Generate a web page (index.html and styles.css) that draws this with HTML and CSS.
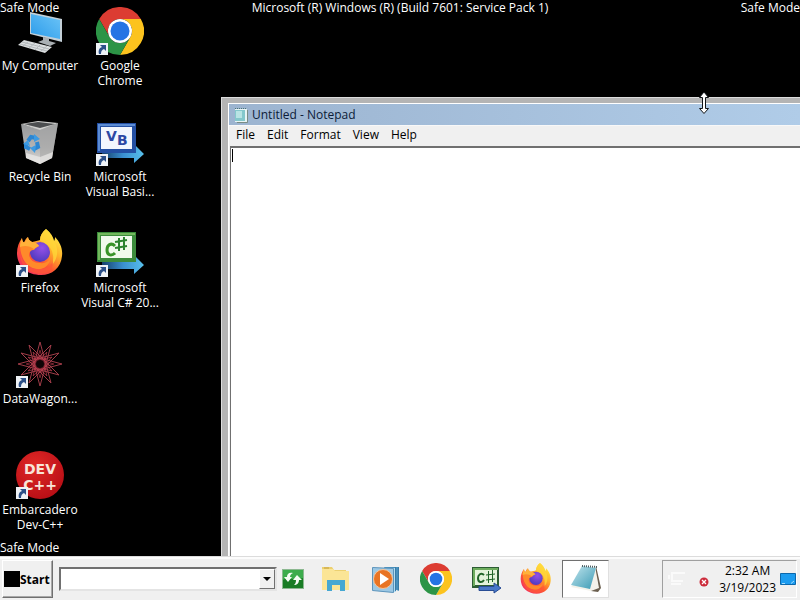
FILE: index.html
```html
<!DOCTYPE html>
<html lang="en">
<head>
  <meta charset="UTF-8">
  <meta name="viewport" content="width=device-width, initial-scale=1.0">
  <title>Untitled - Notepad</title>
  <link rel="stylesheet" href="styles.css">
</head>
<body>
  <!-- shared icons -->
  <svg class="sprite" aria-hidden="true">
    <defs>
      <linearGradient id="screen" x1="0" y1="1" x2="1" y2="0">
        <stop offset="0" stop-color="#2b9bea"/><stop offset="1" stop-color="#6cc4f7"/>
      </linearGradient>
      <linearGradient id="bin" x1="0" y1="0" x2="0" y2="1">
        <stop offset="0" stop-color="#96989a"/><stop offset=".6" stop-color="#b4b4b4"/><stop offset="1" stop-color="#dcdad8"/>
      </linearGradient>
      <linearGradient id="arrow" x1="0" y1="0" x2="1" y2="0">
        <stop offset="0" stop-color="#15406a"/><stop offset=".5" stop-color="#3a8fd0"/><stop offset="1" stop-color="#58c0ec"/>
      </linearGradient>
      <linearGradient id="flame" x1="1" y1="0" x2="0.2" y2="1">
        <stop offset="0.1" stop-color="#fff04a"/><stop offset=".4" stop-color="#ffb12a"/><stop offset=".65" stop-color="#ff5a30"/><stop offset="1" stop-color="#f02868"/>
      </linearGradient>
      <radialGradient id="globe" cx=".6" cy=".3" r=".8">
        <stop offset="0" stop-color="#9450e8"/><stop offset="1" stop-color="#4638b8"/>
      </radialGradient>
      <linearGradient id="page" x1="0" y1="0" x2="1" y2="1">
        <stop offset="0" stop-color="#c4e6ee"/><stop offset="1" stop-color="#3a9ab4"/>
      </linearGradient>
      <radialGradient id="dev" cx=".4" cy=".3" r=".8">
        <stop offset="0" stop-color="#e02826"/><stop offset="1" stop-color="#b40c14"/>
      </radialGradient>
    </defs>

    <symbol id="chrome" viewBox="0 0 48 48">
      <path fill="#dc3c32" d="M3.2 12A24 24 0 0 1 44.8 12H24A12 12 0 0 0 13.6 30z"/>
      <path fill="#fcc31e" d="M44.8 12A24 24 0 0 1 24 48L34.4 30A12 12 0 0 0 24 12z"/>
      <path fill="#2c9446" d="M24 48A24 24 0 0 1 3.2 12L13.6 30A12 12 0 0 0 34.4 30z"/>
      <circle cx="24" cy="24" r="12" fill="#fff"/>
      <circle cx="24" cy="24" r="9.5" fill="#2474e4"/>
    </symbol>

    <symbol id="firefox" viewBox="0 0 48 48">
      <path fill="url(#flame)" d="M30 0C35 4 37 8 38 12C39 11 39 9 39 8C44 13 47 20 46 27C45 39 36 46 25 46C11 46 1 37 1 24C1 18 3 13 6 9C6 11 7 13 8 14C9 11 10 9 12 8C12 10 14 12 16 13C19 12 22 12 24 11C24 7 26 3 30 0z"/>
      <path fill="#ffd83a" d="M30 0C35 4 37 8 38 12C43 19 42 30 36 36C39 27 36 19 31 16C27 13 24 12 24 11C24 7 26 3 30 0z" opacity=".75"/>
      <circle cx="24" cy="23" r="10" fill="url(#globe)"/>
      <path fill="#ff8a2a" d="M4 15C8 12 12 12 16 14C19 13 22 15 23 17C21 18 19 19 18 21C15 21 13 23 13 26C14 31 18 34 24 34C30 35 34 31 35 28C34 36 28 41 21 40C10 39 4 28 4 15z"/>
      <path fill="#ffb23a" d="M6 9C6 11 7 13 8 14L12 8C12 10 14 12 16 13C19 13 22 15 23 17C21 18 19 19 18 20C14 17 9 16 4 18C4 14 5 11 6 9z"/>
      <path fill="#ff5838" d="M4 24C7 36 16 41 24 40C30 40 35 37 37 32C38 40 31 45 24 45C12 45 4 36 4 24z" opacity=".7"/>
    </symbol>

    <symbol id="csharp" viewBox="0 0 48 48">
      <path fill="url(#arrow)" d="M6 32H38V26L48 36L38 45V40H6z"/>
      <path fill="#3c8c3c" d="M1 3H40V33H1z"/>
      <path fill="#72b85c" d="M2 4H39V6H4V31H2z"/>
      <path fill="#f0faec" d="M5 7H36V29H5z"/>
      <path fill="none" stroke="#389428" stroke-width="3" d="M19 17C15 13 11 16 11 21C11 27 16 27 19 24"/>
      <path fill="none" stroke="#2c8430" stroke-width="2" d="M23 9V22M28 8V21M19 13L31 11M19 19L31 17"/>
    </symbol>

    <symbol id="notepad" viewBox="0 0 32 32">
      <path fill="#6c6050" d="M26 3L31 25L28 29L21 28z"/>
      <path fill="#f4f2ea" d="M25 3L29 25L21 28L1 24z"/>
      <path fill="url(#page)" d="M12 3L26 5L20 26L1 22z"/>
      <path fill="none" stroke="#4c5c60" stroke-width="2" stroke-dasharray="1 1" d="M12 3L27 4"/>
    </symbol>

    <symbol id="shortcut" viewBox="0 0 12 12">
      <path fill="#eef2f6" d="M0 0H12V12H0z"/>
      <path fill="#2c5088" d="M4 2H10V8L8 6C6 7 5 8 5 11H3C2 8 3 5 6 4z"/>
    </symbol>
  </svg>

  <main class="desktop">
    <span class="safe-mode top-left">Safe Mode</span>
    <span class="safe-mode top-center">Microsoft (R) Windows (R) (Build 7601: Service Pack 1)</span>
    <span class="safe-mode top-right">Safe Mode</span>
    <span class="safe-mode bottom-left">Safe Mode</span>

    <div class="icons">
      <button class="icon">
        <svg class="icon-image" viewBox="0 0 48 48">
          <path fill="#c4d0d8" d="M14 5L46 12V35L14 27z"/>
          <path fill="url(#screen)" d="M15 7L44 13V32L15 26z"/>
          <path fill="#aab0b4" d="M27 30L33 31V34L40 36L34 39L22 35L27 33z"/>
          <path fill="#dcdfe0" d="M8 33L36 40L29 46L2 38z"/>
          <path fill="none" stroke="#b4b9bc" d="M6 35L33 42M4 37L31 44M13 34L7 39M19 36L13 41M25 37L19 43M31 39L25 44"/>
        </svg>
        <span class="icon-label">My Computer</span>
      </button>
      <button class="icon">
        <svg class="icon-image" viewBox="0 0 48 48">
          <path fill="url(#bin)" d="M5 6L23 11L42 5L36 40L24 46L10 40z"/>
          <path fill="#d0d0ce" d="M5 6L22 3L42 5L24 12z"/>
          <path fill="#4c4e50" d="M8 6L22 4L39 6L24 10z"/>
          <path fill="#a8a8a8" d="M24 12L42 5L36 40L24 46z" opacity=".6"/>
          <path fill="#ecebea" d="M10 35L24 39L37 34L36 40L24 46L10 40z" opacity=".7"/>
          <path fill="none" stroke="#2b86d2" stroke-width="4" d="M12 23L15 19L20 20M21 24L22 29L18 31M14 31L10 29L10 25"/>
          <path fill="#3c9ae2" d="M18 16L24 21L18 24zM20 27L19 35L14 30zM7 26L12 22L14 28z"/>
        </svg>
        <span class="icon-label">Recycle Bin</span>
      </button>
      <button class="icon">
        <svg class="icon-image" viewBox="0 0 48 48"><use href="#firefox"/><use href="#shortcut" y="36" width="12" height="12"/></svg>
        <span class="icon-label">Firefox</span>
      </button>
      <button class="icon">
        <svg class="icon-image" viewBox="0 0 48 48">
          <defs>
            <path id="petal" d="M24 2L19 18C17 26 31 26 29 18z"/>
            <g id="petals">
              <use href="#petal"/>
              <use href="#petal" transform="rotate(30 24 24)"/>
              <use href="#petal" transform="rotate(60 24 24)"/>
              <use href="#petal" transform="rotate(90 24 24)"/>
              <use href="#petal" transform="rotate(120 24 24)"/>
              <use href="#petal" transform="rotate(150 24 24)"/>
              <use href="#petal" transform="rotate(180 24 24)"/>
              <use href="#petal" transform="rotate(210 24 24)"/>
              <use href="#petal" transform="rotate(240 24 24)"/>
              <use href="#petal" transform="rotate(270 24 24)"/>
              <use href="#petal" transform="rotate(300 24 24)"/>
              <use href="#petal" transform="rotate(330 24 24)"/>
            </g>
          </defs>
          <g fill="none" stroke="#a03c48">
            <path d="M24 2L35 43L5 13L46 24L5 35L35 5L24 46L13 5L43 35L2 24L43 13L13 43z"/>
          </g>
          <use href="#petals" fill="none" stroke="#c83c50" transform="translate(9 9) scale(.625)"/>
          <circle cx="24" cy="24" r="4" fill="#100406"/>
          <use href="#shortcut" y="36" width="12" height="12"/>
        </svg>
        <span class="icon-label">DataWagon...</span>
      </button>
      <button class="icon">
        <svg class="icon-image" viewBox="0 0 48 48">
          <circle cx="24" cy="24" r="24" fill="url(#dev)"/>
          <g class="dev-text"><text x="24" y="23">DEV</text><text x="24" y="39">C++</text></g>
          <use href="#shortcut" y="36" width="12" height="12"/>
        </svg>
        <span class="icon-label">Embarcadero Dev-C++</span>
      </button>
      <button class="icon">
        <svg class="icon-image" viewBox="0 0 48 48"><use href="#chrome"/><use href="#shortcut" y="36" width="12" height="12"/></svg>
        <span class="icon-label">Google Chrome</span>
      </button>
      <button class="icon">
        <svg class="icon-image" viewBox="0 0 48 48">
          <path fill="url(#arrow)" d="M6 32H38V26L48 36L38 45V40H6z"/>
          <path fill="#2450a4" d="M1 5H40V35H1z"/>
          <path fill="#5c8cd4" d="M2 6H39V8H4V33H2z"/>
          <path fill="#f2f6fe" d="M5 9H36V31H5z"/>
          <g class="vb-text"><text x="10" y="23">V</text><text x="21" y="27">B</text></g>
          <use href="#shortcut" y="36" width="12" height="12"/>
        </svg>
        <span class="icon-label">Microsoft Visual Basi...</span>
      </button>
      <button class="icon">
        <svg class="icon-image" viewBox="0 0 48 48"><use href="#csharp"/><use href="#shortcut" y="36" width="12" height="12"/></svg>
        <span class="icon-label">Microsoft Visual C# 20...</span>
      </button>
    </div>

    <section class="window">
      <div class="window-inner">
        <header class="title-bar">
          <svg class="title-icon" viewBox="0 0 16 16">
            <path fill="#e8f4f4" d="M2 2H14V15H2z"/>
            <path fill="#84c8cc" d="M2 3H12V14H2z"/>
            <path fill="#b8e4e4" d="M3 4H9V11H3z"/>
            <path fill="none" stroke="#4c7478" stroke-dasharray="1 1" d="M2 1.500H14"/>
            <path fill="none" stroke="#7a8c84" d="M14.500 3V15.500H4"/>
          </svg>
          <h1 class="title">Untitled - Notepad</h1>
        </header>
        <nav class="menu">
          <button>File</button>
          <button>Edit</button>
          <button>Format</button>
          <button>View</button>
          <button>Help</button>
        </nav>
        <div class="editor">
          <textarea class="editor-text" aria-label="Text editor" spellcheck="false"></textarea>
          <span class="caret"></span>
        </div>
      </div>
    </section>

    <svg class="cursor" viewBox="0 0 12 24">
      <path fill="#fff" stroke="#101418" d="M6 1L10.500 6.500H7.500V17.500H10.500L6 22.500L1.500 17.500H4.500V6.500H1.500z"/>
    </svg>
  </main>

  <footer class="taskbar">
    <button class="start"><span class="start-logo"></span>Start</button>
    <div class="address">
      <input class="address-input" type="text" aria-label="Address">
      <button class="address-drop" aria-label="Show addresses">
        <svg width="8" height="4" viewBox="0 0 8 4"><path d="M0 0H8L4 4z"/></svg>
      </button>
    </div>
    <button class="refresh" aria-label="Refresh">
      <svg width="22" height="20" viewBox="0 0 22 20">
        <path fill="#8cb890" d="M0 0H22V20H0z"/>
        <path fill="#187c24" d="M1 1H21V19H1z"/>
        <path fill="#3cac4c" d="M1 1H21V9C14 12 7 8 1 11z"/>
        <path fill="#f4fcf4" d="M11 4C7 3 5 5 5 8H2L6 13L10 8H8C8 6 9 5 11 4zM12 16C15 16 17 14 17 11H20L15 6L11 11H14C14 14 13 15 12 16z"/>
      </svg>
    </button>
    <div class="tasks">
      <button class="task" aria-label="File Explorer">
        <svg width="32" height="32" viewBox="0 0 32 32">
          <path fill="#ecd070" d="M2 4H12L14 7H26V10H2z"/>
          <path fill="#fbe596" d="M2 6H13L15 8H29V27H2z"/>
          <path fill="#d8b858" d="M4 4H9V6H4z"/>
          <path fill="#46a8d2" d="M7 17H25V28H20V22H12V28H7z"/>
        </svg>
      </button>
      <button class="task" aria-label="Media Player">
        <svg width="32" height="32" viewBox="0 0 32 32">
          <path fill="#4890bc" d="M14 4H29V28L24 26z"/>
          <path fill="#b4dcf0" d="M11 5H26V29H13z"/>
          <path fill="none" stroke="#387ca8" d="M25.500 4V28M28.500 4V27"/>
          <path fill="#9cc8e4" stroke="#5c94bc" d="M2.500 4.500L23.500 5.500V29.500L2.500 27.500z"/>
          <circle cx="13" cy="16" r="9.500" fill="#e87424" stroke="#f4c49c"/>
          <path fill="#fff" d="M10 10L19 16L10 22z"/>
        </svg>
      </button>
      <button class="task" aria-label="Google Chrome"><svg width="32" height="32"><use href="#chrome"/></svg></button>
      <button class="task" aria-label="Visual C#">
        <svg width="32" height="32" viewBox="0 0 32 32">
          <path fill="#2c5c34" d="M2 4H29V25H2z"/>
          <path fill="#6cac5c" d="M3 5H28V7H5V23H3z"/>
          <path fill="#e4f4dc" d="M5 7H27V22H5z"/>
          <path fill="none" stroke="#206428" stroke-width="2" d="M14 12C11 9 8 12 8 15C8 20 12 20 14 17"/>
          <path fill="none" stroke="#206428" d="M18.500 8V20M22.500 7V19M16 12L25 11M16 17L25 16"/>
          <path fill="#4878c8" stroke="#284c94" d="M9 23.500H24V20L31 25L24 30V27.500H9z"/>
        </svg>
      </button>
      <button class="task" aria-label="Firefox"><svg width="32" height="32"><use href="#firefox"/></svg></button>
      <button class="task active" aria-label="Untitled - Notepad"><svg width="32" height="32"><use href="#notepad"/></svg></button>
    </div>
    <div class="tray">
      <svg class="tray-icon" width="20" height="16" viewBox="0 0 20 16">
        <path fill="none" stroke="#fafafa" stroke-width="2" d="M18 2H5V10H16M4 13H14M2 4V8"/>
      </svg>
      <svg class="tray-alert" width="10" height="10" viewBox="0 0 10 10">
        <circle cx="5" cy="5" r="4.500" fill="#cc2c3c"/>
        <path stroke="#fff" stroke-width="1.300" d="M3 3L7 7M7 3L3 7"/>
      </svg>
      <div class="clock"><span>2:32 AM</span><span>3/19/2023</span></div>
      <button class="show-desktop" aria-label="Show desktop">
        <svg width="16" height="12" viewBox="0 0 16 12">
          <path fill="#1c9cf0" stroke="#0c68ac" d="M.5 .5H15.500V11.500H.5z"/>
          <path stroke="#a4dcfc" d="M2 10.500H5M11 10.500L14 8"/>
        </svg>
      </button>
    </div>
  </footer>
</body>
</html>
```
FILE: styles.css
```css
* {
  margin: 0;
  padding: 0;
  box-sizing: border-box;
}

body {
  font-family: "Open Sans", "Noto Sans", sans-serif;
  font-size: 12px;
  line-height: 15px;
  background: #000;
  color: #000;
  height: 100vh;
  display: flex;
  flex-direction: column;
  overflow: hidden;
}

button, input, textarea {
  font: inherit;
  color: inherit;
  border: none;
  border-radius: 0;
  background: none;
  outline: none;
}

svg {
  display: block;
}

.sprite {
  position: absolute;
  width: 0;
  height: 0;
}

/* desktop */
.desktop {
  flex: 1;
  min-height: 0;
  position: relative;
  overflow: hidden;
}

.safe-mode {
  position: absolute;
  color: #fff;
  white-space: nowrap;
}

.top-left {
  top: 0;
  left: 0;
}

.top-center {
  top: 0;
  left: 0;
  right: 0;
  text-align: center;
}

.top-right {
  top: 0;
  right: 0;
}

.bottom-left {
  bottom: 1px;
  left: 0;
}

.icons {
  display: grid;
  grid-template-rows: repeat(5, 111px);
  grid-auto-columns: 80px;
  grid-auto-flow: column;
}

.icon {
  display: flex;
  flex-direction: column;
  align-items: center;
  gap: 3px;
  padding-top: 7px;
  color: #fff;
}

.icon-image {
  width: 48px;
  height: 48px;
}

.icon-label {
  text-align: center;
}

.dev-text {
  font: bold 14px "DejaVu Sans", sans-serif;
  fill: #f8e4d8;
  text-anchor: middle;
}

.vb-text {
  font: bold 14px "DejaVu Sans", sans-serif;
  fill: #2c48a4;
}

/* notepad window */
.window {
  position: absolute;
  top: 97px;
  left: 221px;
  right: -8px;
  bottom: -8px;
  display: flex;
  background: #b4b4b4;
  border: 1px solid #dcdcdc;
  padding: 5px 6px;
}

.window-inner {
  flex: 1;
  display: flex;
  flex-direction: column;
  background: #f0f0f0;
  border: 1px solid #fff;
}

.title-bar {
  display: flex;
  align-items: center;
  gap: 3px;
  height: 21px;
  padding-left: 4px;
  background: linear-gradient(to right, #9cb4d0, #b0cce8);
}

.title-icon {
  width: 16px;
  height: 16px;
}

.title {
  font-size: 12px;
  font-weight: normal;
  color: #0c1c38;
}

.menu {
  display: flex;
  height: 21px;
  padding-left: 1px;
  border-top: 1px solid #f8f8f8;
}

.menu button {
  padding: 0 6px 3px;
}

.editor {
  flex: 1;
  display: flex;
  position: relative;
  margin-left: 1px;
  background: #fff;
  border-top: 2px solid #707070;
  border-left: 1px solid #707070;
}

.editor-text {
  flex: 1;
  padding: 1px 4px;
  resize: none;
}

.caret {
  position: absolute;
  top: 1px;
  left: 1px;
  width: 1px;
  height: 13px;
  background: #000;
}

.cursor {
  position: absolute;
  top: 91px;
  left: 698px;
  width: 12px;
  height: 24px;
}

/* taskbar */
.taskbar {
  display: flex;
  align-items: center;
  height: 44px;
  padding: 1px 3px 0 2px;
  background: #f0f0f0;
  border-top: 1px solid #dcdcdc;
  box-shadow: inset 0 2px #fcfcfc;
}

.start {
  display: flex;
  align-items: center;
  width: 51px;
  height: 38px;
  padding-left: 1px;
  font-weight: bold;
  border: 1px solid;
  border-color: #fff #707070 #707070 #fff;
  box-shadow: inset -1px -1px #a8a8a8;
}

.start-logo {
  width: 16px;
  height: 16px;
  background: #000;
}

.address {
  display: flex;
  width: 218px;
  height: 24px;
  margin-left: 6px;
  background: #fff;
  border: 2px solid;
  border-color: #707070 #e4e4e4 #e4e4e4 #707070;
}

.address-input {
  flex: 1;
  min-width: 0;
  padding: 0 4px;
}

.address-drop {
  display: flex;
  align-items: center;
  justify-content: center;
  width: 16px;
  background: #f0f0f0;
  border: 1px solid;
  border-color: #fff #707070 #707070 #fff;
}

.refresh {
  margin-left: 5px;
}

.tasks {
  flex: 1;
  display: flex;
  gap: 3px;
  margin-left: 8px;
}

.task {
  display: flex;
  align-items: center;
  justify-content: center;
  width: 47px;
  height: 38px;
}

.task.active {
  background: #fff;
  border: 1px solid;
  border-color: #707070 #e0e0e0 #e0e0e0 #707070;
}

.tray {
  display: flex;
  align-items: center;
  height: 38px;
  padding-left: 4px;
  border: 1px solid;
  border-color: #a0a0a0 #fff #fff #a0a0a0;
}

.tray-alert {
  margin: 6px 10px 0 12px;
}

.clock {
  display: flex;
  flex-direction: column;
  align-items: center;
  line-height: 17px;
}

.show-desktop {
  margin-left: 4px;
}
```
